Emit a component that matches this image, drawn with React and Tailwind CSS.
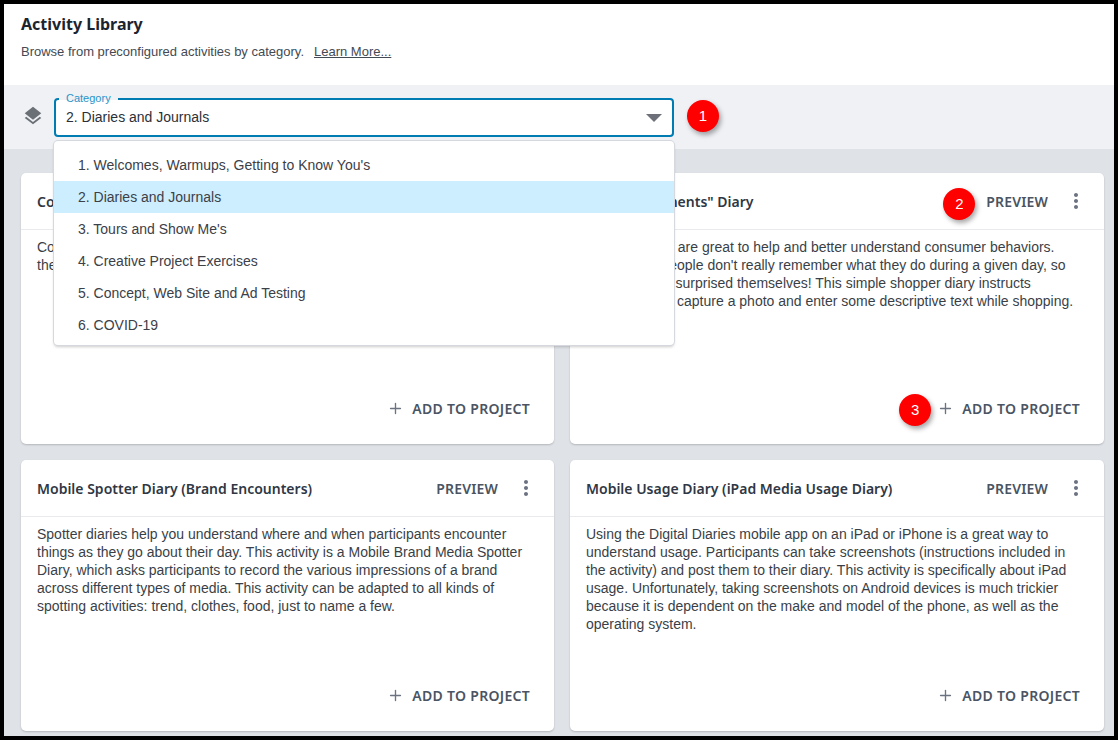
import { Plus } from "lucide-react";
import { MdLayers, MdMoreVert } from "react-icons/md";

const categories = [
  "1. Welcomes, Warmups, Getting to Know You's",
  "2. Diaries and Journals",
  "3. Tours and Show Me's",
  "4. Creative Project Exercises",
  "5. Concept, Web Site and Ad Testing",
  "6. COVID-19",
];

const cards = [
  {
    title: "Consumer Journey Diary",
    lines: ["Consumer diaries capture everyday experiences as they happen in", "the moment."],
  },
  {
    title: 'Mobile "Moments" Diary',
    lines: [
      "Market diaries are great to help and better understand consumer behaviors.",
      "Oftentimes, people don't really remember what they do during a given day, so",
      "they are often surprised themselves! This simple shopper diary instructs",
      "participants to capture a photo and enter some descriptive text while shopping.",
    ],
    previewBadge: 2,
    addBadge: 3,
  },
  {
    title: "Mobile Spotter Diary (Brand Encounters)",
    lines: [
      "Spotter diaries help you understand where and when participants encounter",
      "things as they go about their day. This activity is a Mobile Brand Media Spotter",
      "Diary, which asks participants to record the various impressions of a brand",
      "across different types of media. This activity can be adapted to all kinds of",
      "spotting activities: trend, clothes, food, just to name a few.",
    ],
  },
  {
    title: "Mobile Usage Diary (iPad Media Usage Diary)",
    lines: [
      "Using the Digital Diaries mobile app on an iPad or iPhone is a great way to",
      "understand usage. Participants can take screenshots (instructions included in",
      "the activity) and post them to their diary. This activity is specifically about iPad",
      "usage. Unfortunately, taking screenshots on Android devices is much trickier",
      "because it is dependent on the make and model of the phone, as well as the",
      "operating system.",
    ],
  },
];

function Badge({ n, className = "" }) {
  return (
    <span
      className={`flex h-8 w-8 shrink-0 items-center justify-center rounded-full bg-[#fe0000] text-[15px] text-white shadow-[2px_3px_5px_rgba(0,0,0,0.35)] ${className}`}
    >
      {n}
    </span>
  );
}

function ActivityCard({ card }) {
  return (
    <div className="flex h-[271px] flex-col rounded-[5px] bg-white shadow-[0_1px_2px_rgba(0,0,0,0.2)]">
      <div className="flex h-[57px] shrink-0 items-center border-b border-[#e8eaee] pl-[16px] pr-[16px]">
        <h3 className="font-['Noto_Sans'] text-[14px] font-semibold whitespace-nowrap text-[#2f3744]">{card.title}</h3>
        <div className="relative ml-auto flex items-center">
          {card.previewBadge && <Badge n={card.previewBadge} className="absolute left-[-43px] top-[-1px]" />}
          <span className="font-['Noto_Sans'] text-[14px] font-semibold tracking-[0.15px] text-[#4a5462]">PREVIEW</span>
          <MdMoreVert className="ml-[16px] text-[24px] text-[#6b7280]" />
        </div>
      </div>
      <div className="px-[16px] pt-[8px] text-[14px] leading-[18px] text-[#3a3f47]">
        {card.lines.map((line) => (
          <div key={line} className="whitespace-nowrap">{line}</div>
        ))}
      </div>
      <div className="mt-auto flex justify-end pb-[25px] pr-[24px]">
        <div className="relative flex items-center">
          {card.addBadge && <Badge n={card.addBadge} className="absolute left-[-38px] top-[-4px]" />}
          <Plus className="mr-[8px] h-[17px] w-[17px] text-[#6b7280]" strokeWidth={1.9} />
          <span className="font-['Noto_Sans'] text-[14px] font-semibold tracking-[0.3px] text-[#4a5462]">ADD TO PROJECT</span>
        </div>
      </div>
    </div>
  );
}

export default function App() {
  return (
    <div className="flex h-[740px] w-[1118px] flex-col overflow-hidden border-[4px] border-black bg-[#dfe2e7] font-['Liberation_Sans',sans-serif]">
      <header className="h-[81px] shrink-0 bg-white pl-[17px] pt-[9px]">
        <h1 className="font-['Noto_Sans'] text-[16px] leading-[22px] font-bold text-[#1c2430]">Activity Library</h1>
        <p className="mt-[8px] text-[13px] leading-[18px] text-[#444a53]">
          Browse from preconfigured activities by category.
          <a className="ml-[10px] underline">Learn More...</a>
        </p>
      </header>

      <div className="relative flex h-[64px] shrink-0 items-start bg-[#eff1f5] pl-[18px]">
        <MdLayers className="mt-[20px] text-[22px] text-[#6b6f76]" />
        <div className="relative ml-[10px] mt-[13px] h-[39px] w-[620px]">
          <div className="absolute inset-x-[2px] inset-y-[2px] flex items-center rounded-[2px] bg-white px-[10px] text-[14px] text-[#2b3038]">
            2. Diaries and Journals
            <svg className="ml-auto" width="16" height="8" viewBox="0 0 16 8">
              <path d="M0 0h16l-8 8z" fill="#6d7078" />
            </svg>
          </div>
          <fieldset className="absolute inset-x-0 bottom-0 top-[-5px] rounded-[4px] border-2 border-[#007cb2] pl-[3px]">
            <legend className="relative top-[-1px] pl-[7px] pr-[7px] text-[11px] leading-[12px] text-[#2a93c9]">Category</legend>
          </fieldset>

          <ul className="absolute left-0 top-[43px] z-20 w-[620px] overflow-hidden rounded-[4px] bg-white pb-[4px] pt-[8px] text-[14px] text-[#3c4048] shadow-[0_0_0_1px_#d5d8dd,0_2px_3px_rgba(0,0,0,0.2)]">
            {categories.map((c, i) => (
              <li key={c} className={`flex h-[32px] items-center pl-[24px] ${i === 1 ? "bg-[#cceeff]" : ""}`}>
                {c}
              </li>
            ))}
          </ul>
        </div>
        <Badge n={1} className="ml-[13px] mt-[15px]" />
      </div>

      <main className="grid grid-cols-[533px_534px] gap-x-[16px] gap-y-[16px] pl-[17px] pt-[24px]">
        {cards.map((card) => (
          <ActivityCard key={card.title} card={card} />
        ))}
      </main>
    </div>
  );
}
